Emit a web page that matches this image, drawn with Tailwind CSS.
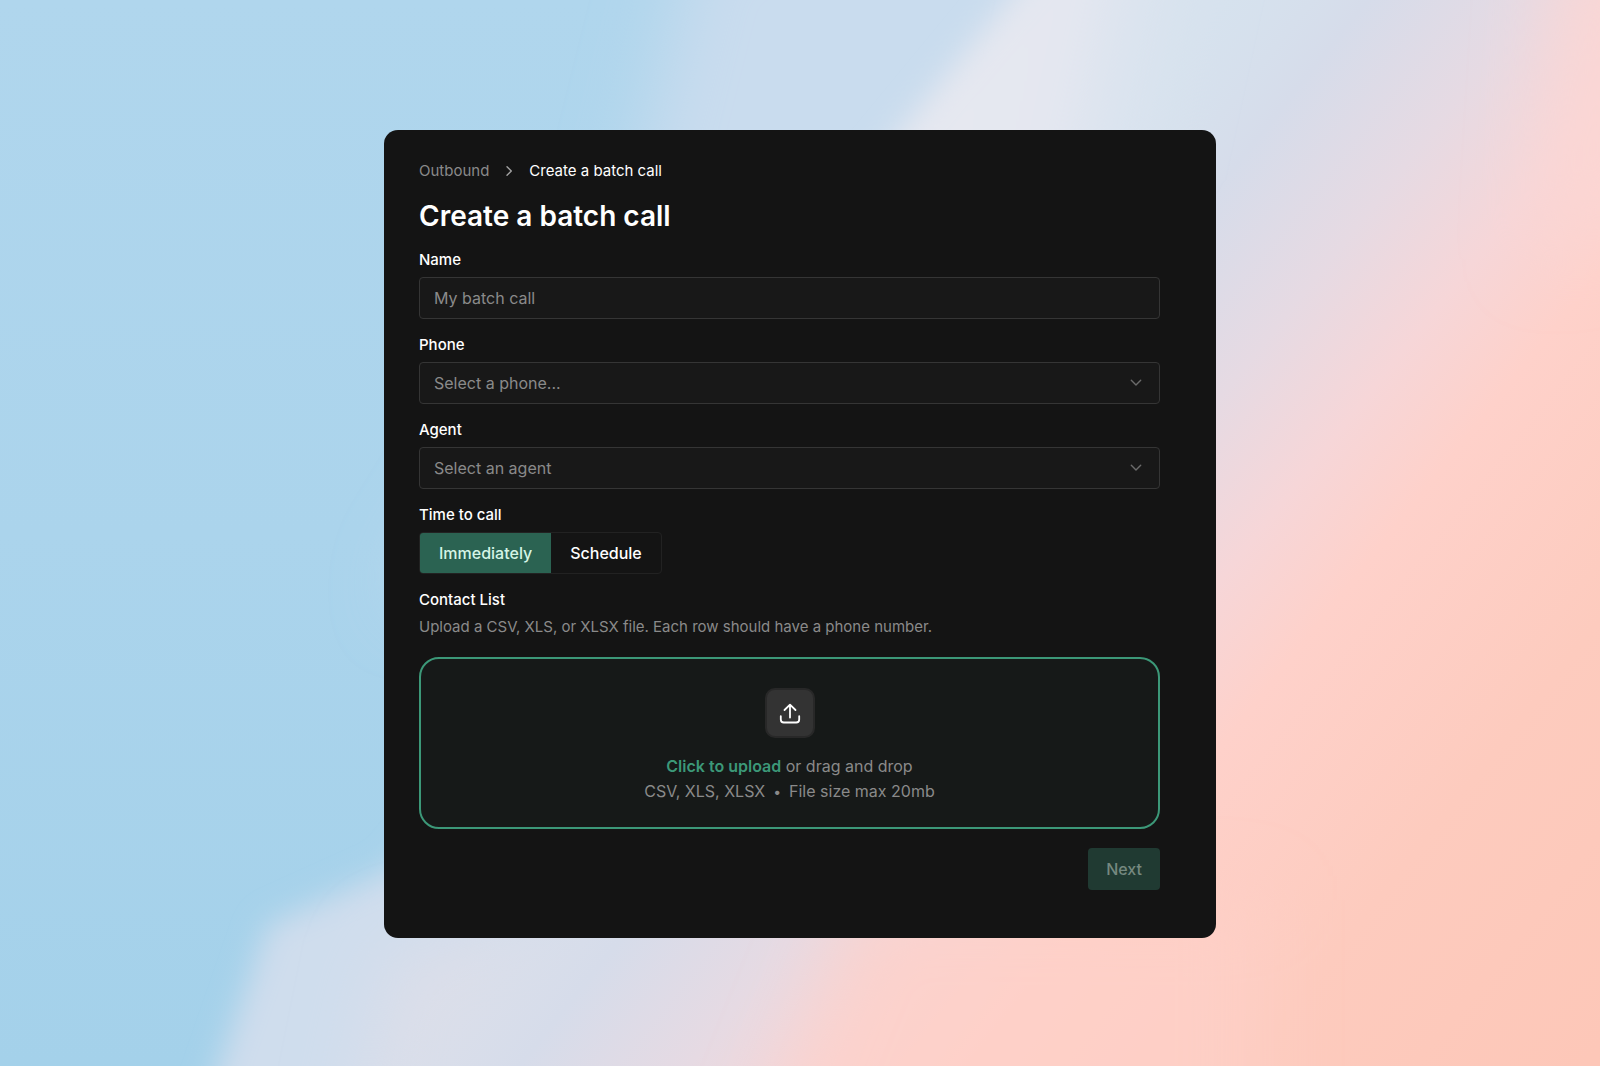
<!DOCTYPE html>
<html lang="en">
<head>
    <meta charset="UTF-8">
    <meta name="viewport" content="width=device-width, initial-scale=1.0">
    <title>Create a batch call</title>
    <script src="https://cdn.jsdelivr.net/npm/@tailwindcss/browser@4"></script>
</head>
<body class="relative isolate min-h-screen flex items-center justify-center bg-[#a9d4ec] pt-0.5 font-['Inter',sans-serif] text-white antialiased">

    <!-- Background gradient -->
    <svg class="fixed inset-0 -z-10 w-full h-full" viewBox="0 0 1600 1066" preserveAspectRatio="none" aria-hidden="true">
        <defs>
            <filter id="soft" x="-50%" y="-50%" width="200%" height="200%"><feGaussianBlur stdDeviation="36"/></filter>
            <filter id="crisp" x="-30%" y="-30%" width="160%" height="160%"><feGaussianBlur stdDeviation="15"/></filter>
            <linearGradient id="sky" x1="0" y1="0" x2="0" y2="1">
                <stop offset="0" stop-color="#b0d6ed"/>
                <stop offset="0.5" stop-color="#abd4ec"/>
                <stop offset="1" stop-color="#a4d1ea"/>
            </linearGradient>
            <linearGradient id="streak" gradientUnits="userSpaceOnUse" x1="950" y1="0" x2="1230" y2="60">
                <stop offset="0" stop-color="#e6e8f0"/>
                <stop offset="0.45" stop-color="#e4e7f0"/>
                <stop offset="1" stop-color="#d6e2ee" stop-opacity="0"/>
            </linearGradient>
            <linearGradient id="pink" gradientUnits="userSpaceOnUse" x1="749" y1="595" x2="1489" y2="1184">
                <stop offset="0" stop-color="#d6dfec" stop-opacity="0"/>
                <stop offset="0.12" stop-color="#d6dcea"/>
                <stop offset="0.26" stop-color="#e6dae3"/>
                <stop offset="0.38" stop-color="#f6d6d8"/>
                <stop offset="0.49" stop-color="#fed1ca"/>
                <stop offset="0.72" stop-color="#fdcbbe"/>
                <stop offset="1" stop-color="#fdc7b8"/>
            </linearGradient>
        </defs>
        <rect width="1600" height="1066" fill="url(#sky)"/>
        <path d="M700 -80 L1700 -80 L1700 600 L400 600 L620 240 Z" fill="#c9dcee" filter="url(#soft)"/>
        <path d="M1100 -80 L1700 -80 L1700 400 L1000 400 Z" fill="#d6e2ee" filter="url(#soft)"/>
        <path d="M700 500 L1200 300 L1200 1150 L190 1150 L268 925 L390 870 Z" fill="#cfdded" filter="url(#crisp)"/>
        <path d="M390 950 L800 850 L800 1200 L340 1200 Z" fill="#dcdee9" filter="url(#soft)"/>
        <rect width="1600" height="1066" fill="url(#pink)"/>
        <!-- Warmer ends of the pink band -->
        <path d="M860 900 L1260 900 L1260 1200 L740 1200 Z" fill="#fed0c8" fill-opacity="0.7" filter="url(#soft)"/>
        <path d="M1560 -60 L1720 -60 L1720 200 L1540 260 Z" fill="#fcd6d3" fill-opacity="0.8" filter="url(#soft)"/>
        <path d="M1050 -50 L1300 -50 L1230 180 L860 180 Z" fill="url(#streak)" filter="url(#crisp)"/>
    </svg>

    <main class="w-full max-w-[832px] rounded-[14px] bg-[#141414] pt-[31px] pr-14 pb-12 pl-[35px]">

        <!-- Breadcrumb -->
        <nav aria-label="Breadcrumb" class="flex items-center text-[15px] leading-5">
            <a href="#" class="text-[#8a8a8a]">Outbound</a>
            <svg class="mx-3 size-4 text-[#a3a3a3]" fill="none" stroke="currentColor" stroke-width="1.4" stroke-linecap="round" stroke-linejoin="round" viewBox="0 0 16 16"><path d="M6 3.700l4.300 4.300L6 12.300"/></svg>
            <span aria-current="page">Create a batch call</span>
        </nav>

        <h1 class="mt-[15px] text-[28px] leading-10 font-semibold">Create a batch call</h1>

        <form class="mt-[14px] flex flex-col gap-4">
            <div class="flex flex-col gap-[7px]">
                <label for="name" class="text-[15px] leading-5 font-medium">Name</label>
                <input id="name" type="text" placeholder="My batch call" class="h-[42px] rounded-[4px] border border-[#353535] bg-[#181818] px-[14px] text-base placeholder:text-[#8a8a8a]">
            </div>

            <div class="flex flex-col gap-[7px]">
                <label for="phone" class="text-[15px] leading-5 font-medium">Phone</label>
                <div class="relative">
                    <select id="phone" class="h-[42px] w-full appearance-none rounded-[4px] border border-[#353535] bg-[#181818] px-[14px] text-base text-[#8a8a8a]">
                        <option>Select a phone...</option>
                    </select>
                    <svg class="pointer-events-none absolute top-3 right-4 size-4 text-[#6b6b6b]" fill="none" stroke="currentColor" stroke-width="1.4" stroke-linecap="round" stroke-linejoin="round" viewBox="0 0 16 16"><path d="M3.300 6.200L8 10.900l4.700-4.700"/></svg>
                </div>
            </div>

            <div class="flex flex-col gap-[7px]">
                <label for="agent" class="text-[15px] leading-5 font-medium">Agent</label>
                <div class="relative">
                    <select id="agent" class="h-[42px] w-full appearance-none rounded-[4px] border border-[#353535] bg-[#181818] px-[14px] text-base text-[#8a8a8a]">
                        <option>Select an agent</option>
                    </select>
                    <svg class="pointer-events-none absolute top-3 right-4 size-4 text-[#6b6b6b]" fill="none" stroke="currentColor" stroke-width="1.4" stroke-linecap="round" stroke-linejoin="round" viewBox="0 0 16 16"><path d="M3.300 6.200L8 10.900l4.700-4.700"/></svg>
                </div>
            </div>

            <fieldset class="flex flex-col">
                <legend class="mb-[7px] text-[15px] leading-5 font-medium">Time to call</legend>
                <div class="flex h-[42px] self-start overflow-hidden rounded-[4px] border border-[#222222] text-base font-medium">
                    <label class="flex items-center px-[19px] has-checked:bg-[#2b6352] has-checked:text-[#d5f5e6]">
                        <input type="radio" name="time" value="now" class="sr-only" checked>Immediately
                    </label>
                    <label class="flex items-center px-[19px] has-checked:bg-[#2b6352] has-checked:text-[#d5f5e6]">
                        <input type="radio" name="time" value="schedule" class="sr-only">Schedule
                    </label>
                </div>
            </fieldset>

            <div>
                <label for="contacts" class="block text-[15px] leading-5 font-medium">Contact List</label>
                <p class="mt-[7px] text-[15px] leading-5 text-[#8a8a8a]">Upload a CSV, XLS, or XLSX file. Each row should have a phone number.</p>

                <!-- Drop zone -->
                <label for="contacts" class="mt-5 flex flex-col items-center rounded-[20px] border-2 border-[#3c9878] bg-[#161918] pt-[29px] pb-[23px] text-base leading-[25px] text-[#8a8a8a]">
                    <input id="contacts" type="file" accept=".csv,.xls,.xlsx" class="sr-only">
                    <span class="mb-4 flex size-[50px] items-center justify-center rounded-[10px] border-2 border-[#282828] bg-[#333333] text-white">
                        <svg class="size-6" fill="none" stroke="currentColor" stroke-width="1.8" stroke-linecap="round" stroke-linejoin="round" viewBox="0 0 24 24"><path d="M12 16.500V4M6.500 9L12 3.600 17.500 9M2.800 15.200v3.300a3 3 0 0 0 3 3h12.400a3 3 0 0 0 3-3v-3.300"/></svg>
                    </span>
                    <span><span class="font-semibold text-[#3c9878]">Click to upload</span> or drag and drop</span>
                    <span class="flex items-center gap-2">CSV, XLS, XLSX <span class="text-sm leading-[25px]">•</span> File size max 20mb</span>
                </label>
            </div>

            <div class="mt-[3px] flex justify-end">
                <button type="submit" disabled class="h-[42px] rounded-[4px] bg-[#203a32] px-[18px] text-base font-medium text-[#75887f]">Next</button>
            </div>
        </form>
    </main>

</body>
</html>
